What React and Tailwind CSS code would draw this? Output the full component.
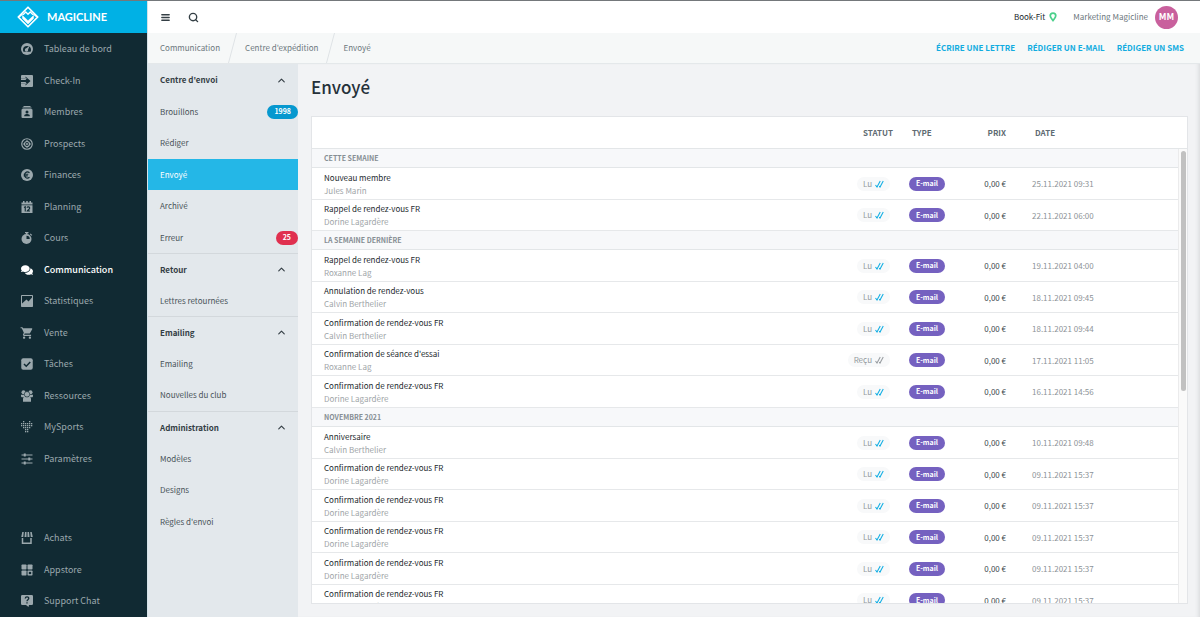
import { FaComments } from "react-icons/fa";
import { MdShoppingCart } from "react-icons/md";
import { LuMenu, LuSearch, LuChevronUp } from "react-icons/lu";

const DARK = "#112a33";

function Svg({ children }) {
  return (
    <svg viewBox="0 0 24 24" className="size-3 shrink-0" fill="currentColor" aria-hidden="true">
      {children}
    </svg>
  );
}

const icons = {
  dashboard: (
    <Svg>
      <circle cx="12" cy="12" r="12" />
      <path d="M4 14a8 8 0 1 1 16 0c0 1.500-.5 2.500-1 3.500H5c-.5-1-1-2-1-3.500z" fill={DARK} />
      <circle cx="11" cy="14" r="3.400" />
      <path d="m8.500 12.500 9-7.500-4.500 11z" />
    </Svg>
  ),
  checkin: (
    <Svg>
      <path d="M2 0h20a2 2 0 0 1 2 2v20a2 2 0 0 1-2 2H2a2 2 0 0 1-2-2v-5h9v4l10-9L9 3v4H0V2a2 2 0 0 1 2-2z" />
      <path d="M0 10h11V7l6 5-6 5v-3H0z" fill={DARK} />
      <path d="M0 7h9V5l2.500 2L9 10H0zM0 17h9v2l2.500-2L9 14H0z" />
    </Svg>
  ),
  members: (
    <Svg>
      <path d="M5 0h14v2H5zM3 3h18v2H3z" />
      <rect x="1" y="6" width="22" height="18" rx="2" />
      <circle cx="12" cy="12" r="3" fill={DARK} />
      <path d="M6.500 20.500v-1.500c0-2 3-3 5.500-3s5.500 1 5.500 3v1.500z" fill={DARK} />
    </Svg>
  ),
  prospects: (
    <Svg>
      <g fill="none" stroke="currentColor">
        <circle cx="12" cy="12" r="10.500" strokeWidth="2.400" />
        <circle cx="12" cy="12" r="5" strokeWidth="2.400" />
        <path d="M12 4v3M12 17v3M4 12h3M17 12h3" strokeWidth="2" />
      </g>
      <circle cx="12" cy="12" r="2" />
    </Svg>
  ),
  finances: (
    <Svg>
      <circle cx="12" cy="12" r="12" />
      <path d="M17 7.500A6 6 0 1 0 17 16.500M5.500 10.500h9M5.500 13.800h8" fill="none" stroke={DARK} strokeWidth="2.200" />
    </Svg>
  ),
  planning: (
    <Svg>
      <path d="M1 3h3V0h3v3h3.500V0h3v3H17V0h3v3h3v4H1zM1 8.500h22V24H1z" />
      <path d="m6 13 2.500-1.500V21M12 13.500c.5-2.500 5.500-2.500 5.500.5 0 2.500-3.500 3.500-5 6h5.500" fill="none" stroke={DARK} strokeWidth="2.200" />
    </Svg>
  ),
  courses: (
    <Svg>
      <path d="M8 0h7v2.500h-2v2H10v-2H8zM19 3l3.500 3-1.500 1.500L17.500 4.500z" />
      <circle cx="11" cy="14" r="10" />
      <path d="M11 14V7.500a6.500 6.500 0 0 1 6.500 6.500z" fill={DARK} />
    </Svg>
  ),
  communication: <FaComments className="size-3 shrink-0" aria-hidden="true" />,
  stats: (
    <Svg>
      <rect width="24" height="24" rx="1.500" />
      <path d="M2 2h20v3l-7 8-4-4-9 8z" fill={DARK} />
    </Svg>
  ),
  sale: <MdShoppingCart className="size-3.5 -mx-px shrink-0" aria-hidden="true" />,
  tasks: (
    <Svg>
      <rect x=".5" y=".5" width="23" height="23" rx="4" />
      <path d="m6 12 4.500 4.500L18.500 8" fill="none" stroke={DARK} strokeWidth="3" />
    </Svg>
  ),
  resources: (
    <Svg>
      <circle cx="5" cy="4.500" r="4" />
      <circle cx="19" cy="4.500" r="4" />
      <path d="M0 9.500h7l2 5H1.500C0 14 0 12 0 9.500zM24 9.500h-7l-2 5h7.500c1.500-.5 1.500-2.500 1.500-5z" />
      <circle cx="12" cy="8.500" r="5.500" stroke={DARK} strokeWidth="1.200" />
      <path d="M4 23.500V18c0-3 2-4.500 4-4.500 2 1.500 6 1.500 8 0 2 0 4 1.500 4 4.500v5.500z" />
    </Svg>
  ),
  mysports: (
    <Svg>
      {[
        [1, 2],
        [0, 1, 2, 3],
        [1, 2, 3, 4, 5],
        [1, 2, 3, 4, 5],
        [0, 1, 2, 3],
        [1, 2],
      ].map((column, x) =>
        column.map((y) => <rect key={`${x}-${y}`} x={x * 4} y={y * 4} width="2.600" height="2.600" />),
      )}
    </Svg>
  ),
  settings: (
    <Svg>
      <path d="M1 4h22M1 12h22M1 20h22" stroke="currentColor" strokeWidth="2.200" />
      <path d="M7.500 1v6M16.500 9v6M7.500 17v6" stroke="currentColor" strokeWidth="4" />
    </Svg>
  ),
  purchases: (
    <Svg>
      <path d="M2.500 0h3L4.500 10H.5zM8 0h3v10H7zM13 0h3l1 10h-4zM18.500 0h3l2 10h-4z" />
      <path d="M3 12v10.500h17V12" fill="none" stroke="currentColor" strokeWidth="3" />
    </Svg>
  ),
  appstore: (
    <Svg>
      <rect x="1" y="1" width="10" height="10" rx="1.500" />
      <rect x="13" y="1" width="10" height="10" rx="1.500" />
      <rect x="1" y="13" width="10" height="10" rx="1.500" />
      <rect x="13" y="13" width="10" height="10" rx="1.500" />
      <circle cx="18" cy="18" r="2.600" fill={DARK} />
    </Svg>
  ),
  support: (
    <Svg>
      <path d="M2.500 0h19A2.500 2.500 0 0 1 24 2.500v15a2.500 2.500 0 0 1-2.500 2.500H16l-1 4-5-4H2.500A2.500 2.500 0 0 1 0 17.500v-15A2.500 2.500 0 0 1 2.500 0z" />
      <path d="M8.500 7c.3-4.500 7.300-4 7 0-.2 2.500-3.500 2.500-3.500 5.500M12 14.500v2.500" fill="none" stroke={DARK} strokeWidth="2.600" />
    </Svg>
  ),
};

const mainNav = [
  ["dashboard", "Tableau de bord"],
  ["checkin", "Check-In"],
  ["members", "Membres"],
  ["prospects", "Prospects"],
  ["finances", "Finances"],
  ["planning", "Planning"],
  ["courses", "Cours"],
  ["communication", "Communication"],
  ["stats", "Statistiques"],
  ["sale", "Vente"],
  ["tasks", "Tâches"],
  ["resources", "Ressources"],
  ["mysports", "MySports"],
  ["settings", "Paramètres"],
];

const footNav = [
  ["purchases", "Achats"],
  ["appstore", "Appstore"],
  ["support", "Support Chat"],
];

const sections = [
  {
    title: "Centre d'envoi",
    items: [
      { label: "Brouillons", count: "1998", tone: "bg-[#0698cf]" },
      { label: "Rédiger" },
      { label: "Envoyé", active: true },
      { label: "Archivé" },
      { label: "Erreur", count: "25", tone: "bg-[#e0304f]" },
    ],
  },
  { title: "Retour", items: [{ label: "Lettres retournées" }] },
  { title: "Emailing", items: [{ label: "Emailing" }, { label: "Nouvelles du club" }] },
  { title: "Administration", items: [{ label: "Modèles" }, { label: "Designs" }, { label: "Règles d'envoi" }] },
];

const CONF = "Confirmation de rendez-vous FR";
const groups = [
  {
    title: "CETTE SEMAINE",
    rows: [
      ["Nouveau membre", "Jules Marin", "Lu", "25.11.2021 09:31"],
      ["Rappel de rendez-vous FR", "Dorine Lagardère", "Lu", "22.11.2021 06:00"],
    ],
  },
  {
    title: "LA SEMAINE DERNIÈRE",
    rows: [
      ["Rappel de rendez-vous FR", "Roxanne Lag", "Lu", "19.11.2021 04:00"],
      ["Annulation de rendez-vous", "Calvin Berthelier", "Lu", "18.11.2021 09:45"],
      [CONF, "Calvin Berthelier", "Lu", "18.11.2021 09:44"],
      ["Confirmation de séance d'essai", "Roxanne Lag", "Reçu", "17.11.2021 11:05"],
      [CONF, "Dorine Lagardère", "Lu", "16.11.2021 14:56"],
    ],
  },
  {
    title: "NOVEMBRE 2021",
    rows: [
      ["Anniversaire", "Calvin Berthelier", "Lu", "10.11.2021 09:48"],
      [CONF, "Dorine Lagardère", "Lu", "09.11.2021 15:37"],
      [CONF, "Dorine Lagardère", "Lu", "09.11.2021 15:37"],
      [CONF, "Dorine Lagardère", "Lu", "09.11.2021 15:37"],
      [CONF, "Dorine Lagardère", "Lu", "09.11.2021 15:37"],
      [CONF, "Dorine Lagardère", "Lu", "09.11.2021 15:37"],
    ],
  },
];

function NavList({ items }) {
  return (
    <ul>
      {items.map(([icon, label]) => (
        <li key={label} className="odd:h-8 even:h-[31px]">
          <a
            href="#"
            className={`flex h-full items-center gap-[11px] pl-[21px] text-[9px] ${
              label === "Communication" ? "font-medium text-white" : "text-[#9ba8ad]"
            }`}
          >
            {icons[icon]}
            {label}
          </a>
        </li>
      ))}
    </ul>
  );
}

function Sidebar() {
  return (
    <aside className="flex w-[148px] shrink-0 flex-col border-r border-[#d5e2e8] bg-[#112a33]">
      <a href="#" className="flex h-8 shrink-0 items-center gap-2 bg-[#00b1e5] pl-[17px] text-white">
        <svg viewBox="0 0 44 44" className="size-[22px]" fill="none" stroke="currentColor" aria-hidden="true">
          <path d="M22 2.500 41.500 22 22 41.500 2.500 22z" strokeWidth="3.400" strokeLinejoin="round" />
          <path d="M11 19l11 10.500L33 19v6L22 36 11 25z" fill="currentColor" strokeWidth="1" />
          <path d="M12 17.500 17.500 12 22 16.500 26.500 12l5.500 5.500" strokeWidth="2.600" />
          <path d="M4 22l7-6M40 22l-7-6" strokeWidth="3" />
        </svg>
        <span className="font-[Lato,sans-serif] text-[11px] font-bold">MAGICLINE</span>
      </a>
      <nav aria-label="Navigation principale" className="flex grow flex-col justify-between">
        <NavList items={mainNav} />
        <NavList items={footNav} />
      </nav>
    </aside>
  );
}

function TopBar() {
  return (
    <header className="flex h-8 shrink-0 items-center justify-between bg-white pr-[22px] pl-3">
      <div className="flex items-center gap-[17px] text-[#343f45]">
        <button type="button" aria-label="Menu">
          <LuMenu className="size-[11px]" strokeWidth={3} />
        </button>
        <button type="button" aria-label="Rechercher">
          <LuSearch className="size-[11px]" strokeWidth={3} />
        </button>
      </div>
      <div className="flex items-center text-[8px]">
        <a href="#" className="flex items-center gap-1 text-[#20272b]">
          Book-Fit
          <svg viewBox="0 0 16 20" className="h-2.5 w-2" fill="none" stroke="#4bd08b" strokeWidth="3.500" aria-hidden="true">
            <path d="M8 17C5 13 2.500 11 2.500 7.500a5.500 5.500 0 0 1 11 0C13.500 11 11 13 8 17z" />
          </svg>
        </a>
        <a href="#" className="ml-4 flex items-center gap-[7px] text-[#6c777d]">
          Marketing Magicline
          <span className="flex size-[23px] items-center justify-center rounded-full bg-[#c9609d] text-[9px] font-bold text-white">
            MM
          </span>
        </a>
      </div>
    </header>
  );
}

function Slash() {
  return (
    <svg viewBox="0 0 9 30" className="h-[30px] w-[9px]" fill="none" stroke="#dfe3e6" aria-hidden="true">
      <path d="M8.500 0 .5 30" />
    </svg>
  );
}

function CrumbBar() {
  return (
    <div className="flex h-[31px] shrink-0 items-center justify-between border-b border-[#e4e8ea] bg-[#f6f8f8] pr-4 pl-3">
      <nav aria-label="Fil d'Ariane" className="flex items-center gap-2 text-[8px] text-[#6c777d]">
        <a href="#">Communication</a>
        <Slash />
        <a href="#">Centre d'expédition</a>
        <Slash />
        <a href="#">Envoyé</a>
      </nav>
      <div className="flex gap-3 text-[8px] font-bold text-[#12ace0]">
        <button type="button">ÉCRIRE UNE LETTRE</button>
        <button type="button">RÉDIGER UN E-MAIL</button>
        <button type="button">RÉDIGER UN SMS</button>
      </div>
    </div>
  );
}

function SubMenu() {
  return (
    <nav aria-label="Communication" className="w-[150px] shrink-0 bg-[#e3e8ec] text-[8px] text-[#495359]">
      {sections.map(({ title, items }, index) => (
        <ul key={title} className={index ? "border-t border-[#d3d8dc]" : ""}>
          <li className={index ? "h-[31px]" : "h-8"}>
            <button type="button" className="flex h-full w-full items-center justify-between px-[11px] pl-3 font-bold text-[#333d44]">
              {title}
              <LuChevronUp className="size-[11px]" strokeWidth={2.5} />
            </button>
          </li>
          {items.map(({ label, count, tone, active }) => (
            <li key={label} className={`odd:h-8 even:h-[31px] ${active ? "bg-[#24b7e7] text-white" : ""}`}>
              <a href="#" className="flex h-full items-center justify-between pl-3">
                {label}
                {count && (
                  <span className={`flex h-3.5 items-center rounded-full px-[7px] text-[7px] font-bold text-white ${tone}`}>
                    {count}
                  </span>
                )}
              </a>
            </li>
          ))}
        </ul>
      ))}
    </nav>
  );
}

function Status({ value }) {
  return (
    <span className="inline-flex h-3.5 items-center gap-[3px] rounded-full bg-[#f8f9fa] px-1.5 text-[#939a9e]">
      {value}
      <svg
        viewBox="0 0 18 16"
        className={`h-2 w-[9px] ${value === "Lu" ? "text-[#16b0e4]" : "text-[#9a9fa3]"}`}
        fill="none"
        stroke="currentColor"
        strokeWidth="2.200"
        aria-hidden="true"
      >
        <path d="m1 10 3 4 6.500-12M8.500 12.500l1.500 1.500L16.500 2" />
      </svg>
    </span>
  );
}

function Mailings() {
  return (
    <div className="flex min-h-0 flex-1 border border-[#e3e5e8] bg-white">
      <div className="min-w-0 flex-1 overflow-y-auto [scrollbar-width:none]">
        <table className="w-full table-fixed border-separate border-spacing-0 text-left text-[8px] leading-[13px]">
          <thead className="sticky top-0 z-10 bg-white text-[#606b72]">
            <tr className="h-8 *:border-b *:border-[#e3e6e8] *:p-0 *:font-bold">
              <td />
              <th scope="col" className="w-[60px] text-right"><span className="pr-1.5">STATUT</span></th>
              <th scope="col" className="w-[61px]"><span className="pl-[13px]">TYPE</span></th>
              <th scope="col" className="w-[56px] text-right"><span className="pr-2.5">PRIX</span></th>
              <th scope="col" className="w-[162px]"><span className="pl-[19px]">DATE</span></th>
            </tr>
          </thead>
          {groups.map((group, index) => (
            <tbody key={group.title}>
              <tr className="h-[19px]">
                <th
                  scope="colgroup"
                  colSpan={5}
                  className="border-b border-[#e3e6e8] bg-[#f7f8fa] p-0 pl-3 text-[7px] font-bold text-[#868e94]"
                >
                  {group.title}
                </th>
              </tr>
              {group.rows.map(([title, name, status, date], row) => (
                <tr
                  key={`${index}-${row}`}
                  className="odd:h-[31px] even:h-8 *:border-b *:border-[#e6e8ea] *:p-0"
                >
                  <td className="pl-3!">
                    <div className="text-[#23292d]">{title}</div>
                    <div className="text-[#a0a5a8]">{name}</div>
                  </td>
                  <td className="pr-[9px]! text-right leading-none"><Status value={status} /></td>
                  <td className="pl-2.5!">
                    <span className="flex h-3.5 w-9 items-center justify-center rounded-full bg-[#7561c0] text-[7px] font-bold text-white">
                      E-mail
                    </span>
                  </td>
                  <td className="pr-2.5! text-right text-[#3d474d]">0,00 €</td>
                  <td className="pl-4! text-[#8d9397]">{date}</td>
                </tr>
              ))}
            </tbody>
          ))}
        </table>
      </div>
      <div className="flex w-[9px] shrink-0 flex-col" aria-hidden="true">
        <div className="h-8 border-b border-[#e3e6e8]" />
        <div className="flex-1 border-l border-[#ebebec] bg-[#fafafa] pt-0.5 pl-0.5">
          <div className="h-[53%] w-[5px] rounded-full bg-[#c1c1c1]" />
        </div>
      </div>
    </div>
  );
}

export default function App() {
  return (
    <div className="flex h-screen min-h-[580px] border-t border-[#74787b] bg-[#f2f3f5] font-['Noto_Sans_CJK_SC','Noto_Sans',sans-serif]">
      <Sidebar />
      <div className="flex min-w-0 flex-1 flex-col">
        <TopBar />
        <CrumbBar />
        <div className="flex min-h-0 flex-1">
          <SubMenu />
          <main className="flex min-w-0 flex-1 flex-col pr-3 pb-[13px] pl-[13px] shadow-[inset_-4px_0_4px_-3px_#d4d6d9]">
            <h1 className="mb-1.5 flex h-[46px] shrink-0 items-center text-[17px] font-medium text-[#26313a]">Envoyé</h1>
            <Mailings />
          </main>
        </div>
      </div>
    </div>
  );
}
